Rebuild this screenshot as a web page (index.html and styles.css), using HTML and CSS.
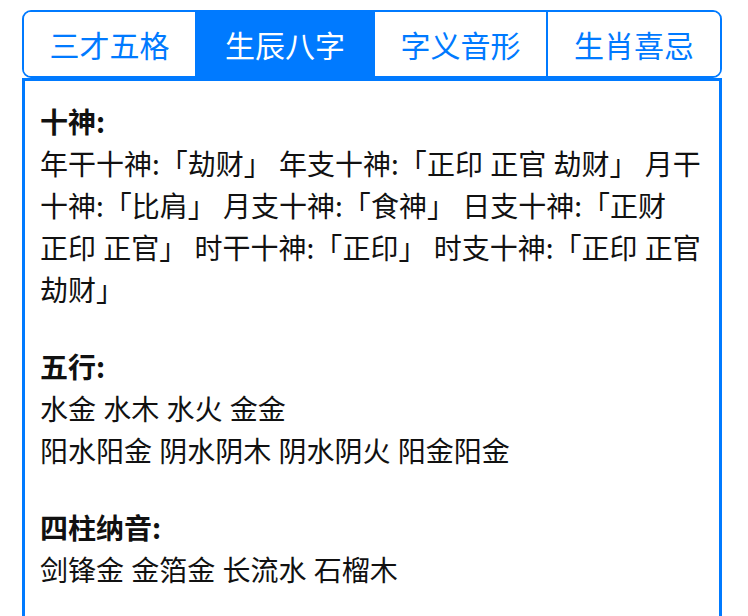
FILE: index.html
```html
<!DOCTYPE html>
<html lang="zh-CN">
<head>
<meta charset="utf-8">
<title>生辰八字</title>
<link rel="stylesheet" href="styles.css">
</head>
<body>
<div class="page">
  <div class="tabs">
    <div class="tab">三才五格</div>
    <div class="tab active">生辰八字</div>
    <div class="tab">字义音形</div>
    <div class="tab">生肖喜忌</div>
  </div>
  <div class="panel">
    <div class="section">
      <div class="title">十神:</div>
      <div class="text">年干十神:「<span class="term">劫财</span>」 年支十神:「<span class="term">正印</span> <span class="term">正官</span> <span class="term">劫财</span>」 月干十神:「<span class="term">比肩</span>」 月支十神:「<span class="term">食神</span>」 日支十神:「<span class="term">正财</span> <span class="term">正印</span> <span class="term">正官</span>」 时干十神:「<span class="term">正印</span>」 时支十神:「<span class="term">正印</span> <span class="term">正官</span> <span class="term">劫财</span>」</div>
    </div>
    <div class="section">
      <div class="title">五行:</div>
      <div class="text">水金 水木 水火 金金</div>
      <div class="text">阳水阳金 阴水阴木 阴水阴火 阳金阳金</div>
    </div>
    <div class="section">
      <div class="title">四柱纳音:</div>
      <div class="text">剑锋金 金箔金 长流水 石榴木</div>
    </div>
  </div>
</div>
</body>
</html>
```

FILE: styles.css
```css
html, body {
  margin: 0;
  padding: 0;
  background: #ffffff;
}

body {
  font-family: "Noto Sans CJK SC", "Noto Sans", sans-serif;
  color: #111111;
}

.page {
  width: 700px;
  padding: 10px 0 0 22px;
}

.tabs {
  display: grid;
  grid-template-columns: 171px 178px 173px 174px;
  height: 68px;
  box-sizing: border-box;
  border: 2px solid #007aff;
  border-radius: 9px;
  overflow: hidden;
}

.tab {
  display: flex;
  align-items: center;
  justify-content: center;
  font-size: 30px;
  color: #007aff;
  background: #ffffff;
  box-sizing: border-box;
}

.tab + .tab {
  border-left: 2px solid #007aff;
}

.tab.active {
  background: #007aff;
  color: #ffffff;
}

.panel {
  box-sizing: border-box;
  min-height: 600px;
  border: 3px solid #007aff;
  border-bottom: none;
  padding: 19px 16px 0 15px;
}

.section {
  margin-bottom: 35px;
}

.title {
  font-size: 28px;
  font-weight: bold;
  line-height: 42px;
}

.text {
  font-size: 28px;
  line-height: 42px;
  word-spacing: 1px;
}

.term {
  white-space: nowrap;
}
```
